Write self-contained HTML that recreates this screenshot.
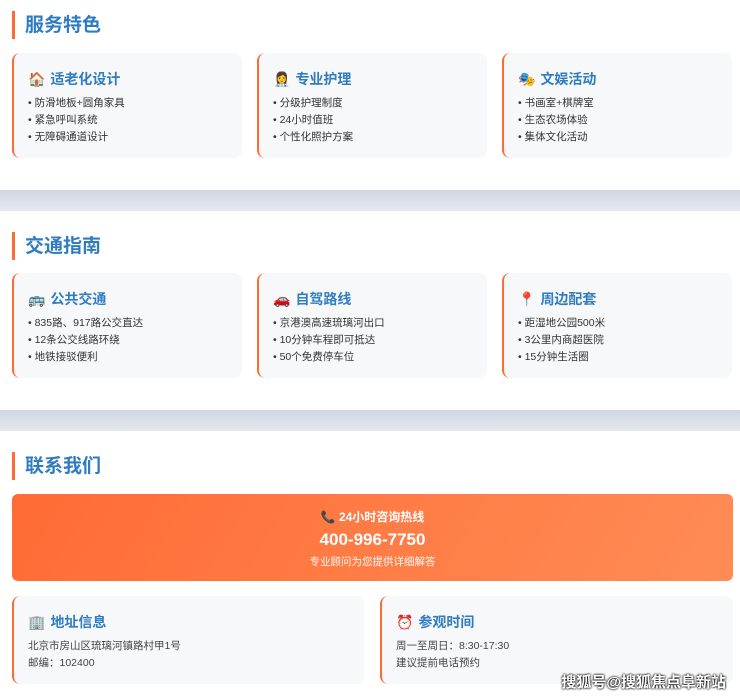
<!DOCTYPE html>
<html><head><meta charset="utf-8"><style>
*{margin:0;padding:0;box-sizing:border-box}
body{width:740px;height:697px;background:#fff;font-family:"Liberation Sans","Noto Sans CJK SC",sans-serif;overflow:hidden;position:relative}
.band{position:absolute;left:0;width:740px;background:linear-gradient(#d0d6e2,#e4e8ef)}
.h{position:absolute;left:12px;height:28px;border-left:3px solid #ff6b35;padding-left:10px;font-size:19px;font-weight:bold;color:#2f7cc0;line-height:30px}
.card{position:absolute;background:#f7f8fa;border-radius:8px;border-left:2px solid #ff6b35;padding:15px 0 0 14px}
.ct{font-size:14px;font-weight:bold;color:#2f7cc0;height:22px;line-height:22px;margin-bottom:5px}
.ct span{font-size:14px;margin-right:5px}
.li{font-size:10.5px;color:#333;line-height:17px}
.p{font-size:10.5px;color:#444;line-height:17px}
.hot{position:absolute;left:12px;top:494px;width:721px;height:87px;border-radius:6px;background:linear-gradient(120deg,#ff6b35,#ff8c55);color:#fff;text-align:center}
.wm{position:absolute;right:14px;top:671px;font-size:15px;font-weight:bold;color:#fff;text-shadow:0 0 2px #000,0 0 2px #000}
</style></head><body>
<div class="band" style="top:190px;height:21px"></div>
<div class="band" style="top:410px;height:21px"></div>
<div class="h" style="top:11px">服务特色</div>
<div class="card" style="left:12px;top:53px;width:230px;height:105px"><div class="ct"><span>🏠</span>适老化设计</div><div class="li">• 防滑地板+圆角家具</div><div class="li">• 紧急呼叫系统</div><div class="li">• 无障碍通道设计</div></div>
<div class="card" style="left:257px;top:53px;width:230px;height:105px"><div class="ct"><span>👩‍⚕️</span>专业护理</div><div class="li">• 分级护理制度</div><div class="li">• 24小时值班</div><div class="li">• 个性化照护方案</div></div>
<div class="card" style="left:502px;top:53px;width:230px;height:105px"><div class="ct"><span>🎭</span>文娱活动</div><div class="li">• 书画室+棋牌室</div><div class="li">• 生态农场体验</div><div class="li">• 集体文化活动</div></div>
<div class="h" style="top:232px">交通指南</div>
<div class="card" style="left:12px;top:273px;width:230px;height:105px"><div class="ct"><span>🚌</span>公共交通</div><div class="li">• 835路、917路公交直达</div><div class="li">• 12条公交线路环绕</div><div class="li">• 地铁接驳便利</div></div>
<div class="card" style="left:257px;top:273px;width:230px;height:105px"><div class="ct"><span>🚗</span>自驾路线</div><div class="li">• 京港澳高速琉璃河出口</div><div class="li">• 10分钟车程即可抵达</div><div class="li">• 50个免费停车位</div></div>
<div class="card" style="left:502px;top:273px;width:230px;height:105px"><div class="ct"><span>📍</span>周边配套</div><div class="li">• 距湿地公园500米</div><div class="li">• 3公里内商超医院</div><div class="li">• 15分钟生活圈</div></div>
<div class="h" style="top:452px">联系我们</div>
<div class="hot"><div style="font-size:12px;font-weight:bold;margin-top:14px;line-height:18px">📞 24小时咨询热线</div><div style="font-size:17px;font-weight:bold;line-height:24px;margin-top:2px">400-996-7750</div><div style="font-size:10.5px;line-height:16px;margin-top:2px;opacity:.95">专业顾问为您提供详细解答</div></div>
<div class="card" style="left:12px;top:596px;width:352px;height:88px"><div class="ct"><span>🏢</span>地址信息</div><div class="p">北京市房山区琉璃河镇路村甲1号</div><div class="p">邮编：102400</div></div>
<div class="card" style="left:380px;top:596px;width:353px;height:88px"><div class="ct"><span>⏰</span>参观时间</div><div class="p">周一至周日：8:30-17:30</div><div class="p">建议提前电话预约</div></div>
<div class="wm">搜狐号@搜狐焦点阜新站</div>
</body></html>
